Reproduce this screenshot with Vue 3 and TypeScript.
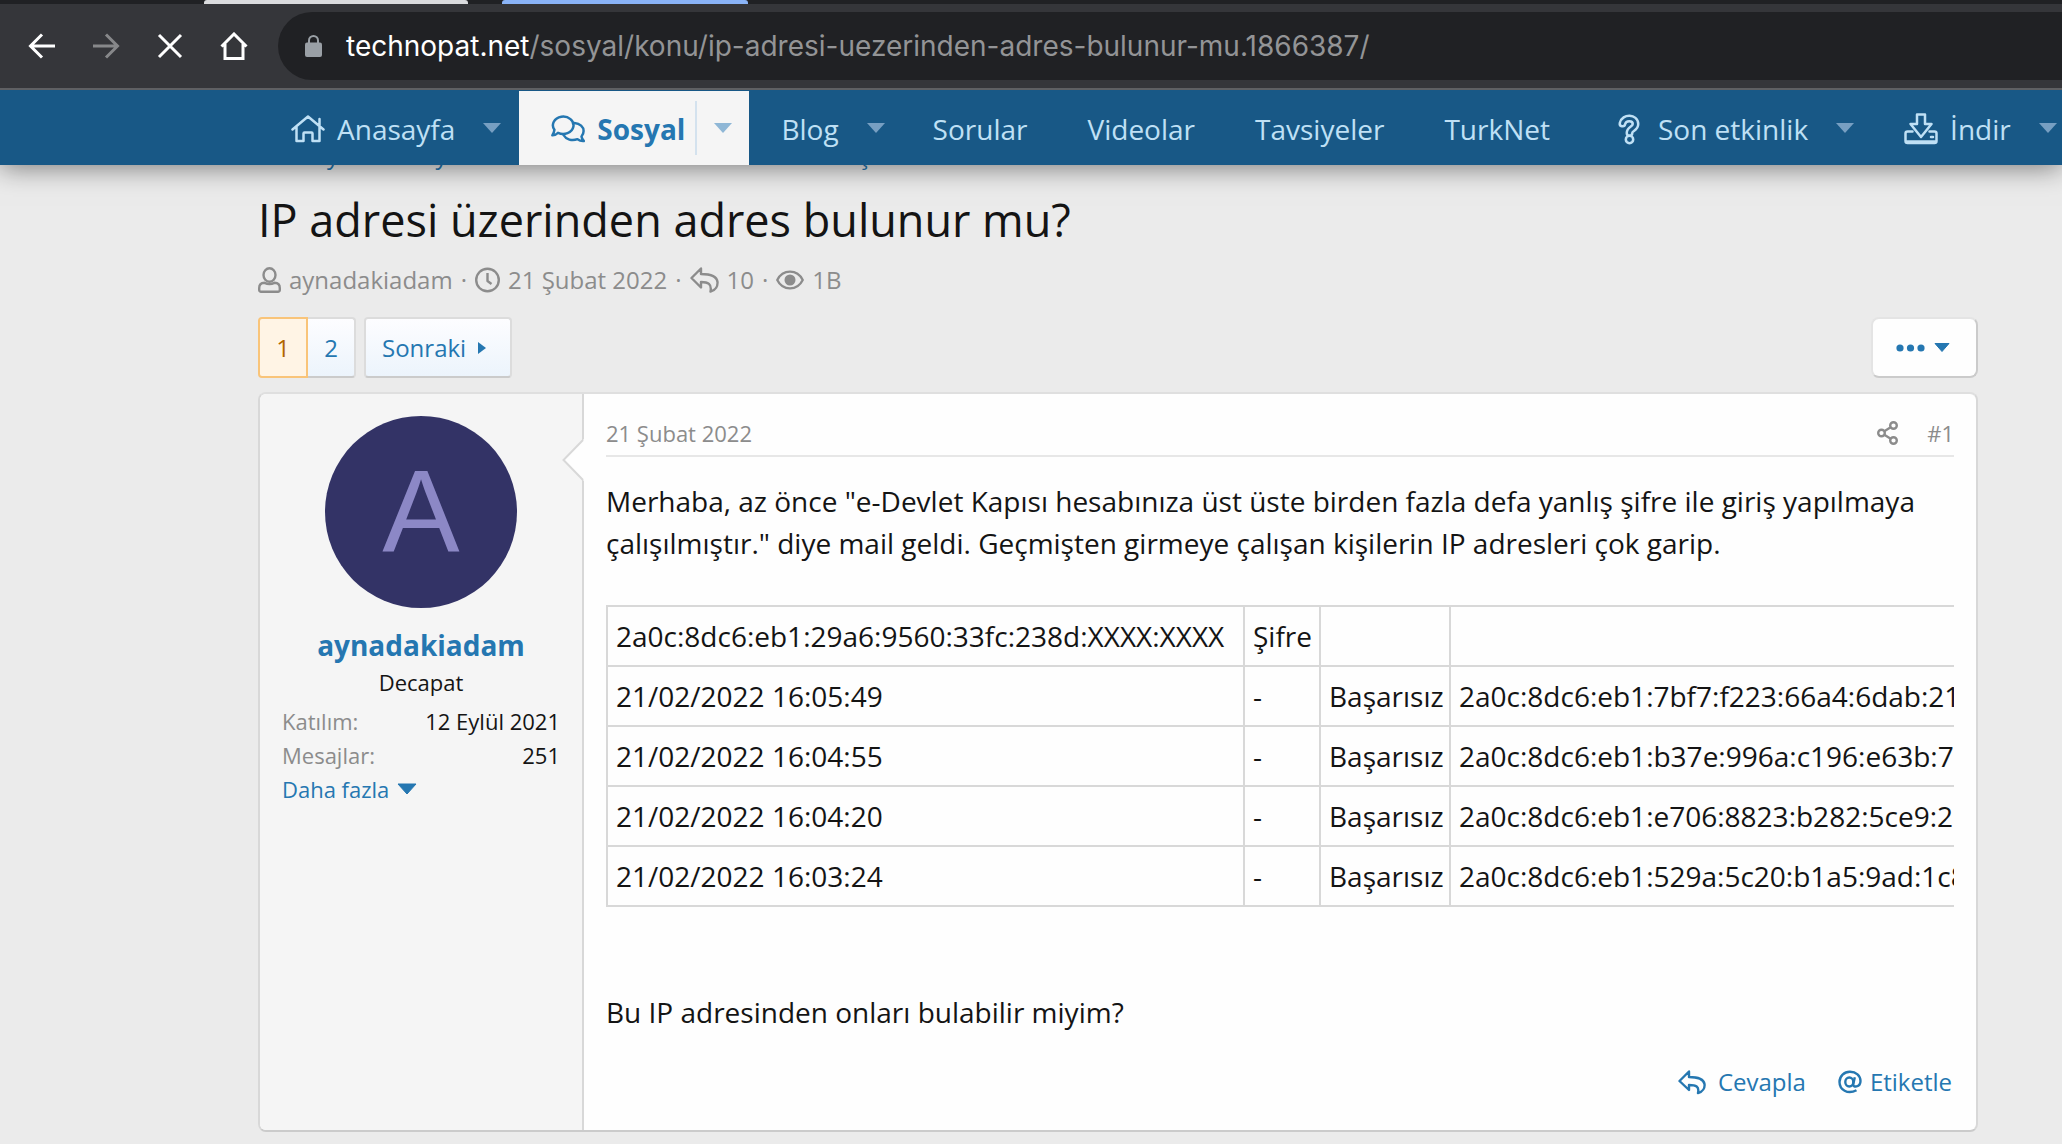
<script setup lang="ts">
interface NavItem {
  label: string
  icon?: 'home' | 'comments' | 'question' | 'download'
  menu?: boolean
  active?: boolean
}

const navItems: NavItem[] = [
  { label: 'Anasayfa', icon: 'home', menu: true },
  { label: 'Sosyal', icon: 'comments', menu: true, active: true },
  { label: 'Blog', menu: true },
  { label: 'Sorular' },
  { label: 'Videolar' },
  { label: 'Tavsiyeler' },
  { label: 'TurkNet' },
  { label: 'Son etkinlik', icon: 'question', menu: true },
  { label: 'İndir', icon: 'download', menu: true },
]

const crumbs = ['Sosyal', 'Sosyal', 'Modem ve kablosuz internet erişimi']

const logRows: string[][] = [
  ['2a0c:8dc6:eb1:29a6:9560:33fc:238d:XXXX:XXXX', 'Şifre', '', ''],
  ['21/02/2022 16:05:49', '-', 'Başarısız', '2a0c:8dc6:eb1:7bf7:f223:66a4:6dab:21'],
  ['21/02/2022 16:04:55', '-', 'Başarısız', '2a0c:8dc6:eb1:b37e:996a:c196:e63b:7'],
  ['21/02/2022 16:04:20', '-', 'Başarısız', '2a0c:8dc6:eb1:e706:8823:b282:5ce9:2'],
  ['21/02/2022 16:03:24', '-', 'Başarısız', '2a0c:8dc6:eb1:529a:5c20:b1a5:9ad:1c8'],
]
</script>

<template>
  <div class="page">
    <header class="top">
      <div class="tabs" aria-hidden="true">
        <span class="tab tab-light"></span>
        <span class="tab tab-blue"></span>
      </div>
      <div class="toolbar">
        <button class="tool" type="button" aria-label="Geri">
          <svg width="28" height="28" viewBox="0 0 28 28"><path d="M27 14H3M14 2.5 2.5 14 14 25.5" /></svg>
        </button>
        <button class="tool dim" type="button" aria-label="İleri">
          <svg width="28" height="28" viewBox="0 0 28 28"><path d="M1 14H25M14 2.5 25.5 14 14 25.5" /></svg>
        </button>
        <button class="tool" type="button" aria-label="Durdur">
          <svg width="28" height="28" viewBox="0 0 28 28"><path d="M3 3 25 25M25 3 3 25" /></svg>
        </button>
        <button class="tool" type="button" aria-label="Ana sayfa">
          <svg width="28" height="28" viewBox="0 0 28 28"><path d="M1.5 14.5 14 2 26.5 14.5M5 12V26.5H23V12" /></svg>
        </button>
        <div class="omnibox">
          <svg class="lock" width="17" height="22" viewBox="0 0 17 22">
            <rect x="0" y="7.5" width="17" height="14.5" rx="2" fill="#9aa0a6" />
            <path d="M4 8.5V5.5a4.5 4.5 0 0 1 9 0V8.5" fill="none" stroke="#9aa0a6" stroke-width="2" />
          </svg>
          <span class="url"><b>technopat.net</b>/sosyal/konu/ip-adresi-uezerinden-adres-bulunur-mu.1866387/</span>
        </div>
      </div>

      <nav class="nav">
        <div v-for="item in navItems" :key="item.label" class="nav-item" :class="{ active: item.active }">
          <a class="nav-link" :class="{ plain: !item.menu }" href="#">
            <svg v-if="item.icon === 'home'" class="ico" width="34" height="28" viewBox="0 0 34 28">
              <path d="M1.5 14.5 17 1.5 32.5 14.5M28.5 11V4M5.5 11.5V26H12.5V18.5a1 1 0 0 1 1-1H20.5a1 1 0 0 1 1 1V26H28.5V11.5" />
            </svg>
            <svg v-else-if="item.icon === 'comments'" class="ico" width="34" height="28" viewBox="0 0 34 28">
              <path d="M7 17.8A10.3 8.7 0 1 0 3.4 14.8C3.2 17 2.2 18.8 1.4 20.3C3.8 20.4 5.6 19.1 7 17.8Z" />
              <path d="M23.5 8C29 8.5 32.6 12 32.6 16C32.6 18.5 31.8 20 30.5 21.5C30.8 23.5 31.8 25 32.8 26C30 26.3 28 25.3 26.5 24.2C21 26.3 15 24.5 12.5 20" />
            </svg>
            <svg v-else-if="item.icon === 'question'" class="ico" width="34" height="32" viewBox="0 0 34 32">
              <path class="outer" d="M10.5 10.5C12 3.5 23.5 4 23.5 11C23.5 16 17.5 15.5 17.5 20" />
              <path class="inner" d="M10.5 10.5C12 3.5 23.5 4 23.5 11C23.5 16 17.5 15.5 17.5 20" />
              <circle cx="17.5" cy="26.5" r="3.7" fill="#185886" />
            </svg>
            <svg v-else-if="item.icon === 'download'" class="ico" width="34" height="32" viewBox="0 0 34 32">
              <path d="M13 1.5H21V11H27.5L17 24 6.5 11H13ZM8.5 18.5H3.5a2 2 0 0 0-2 2V28a2 2 0 0 0 2 2H30.5a2 2 0 0 0 2-2V20.5a2 2 0 0 0-2-2H25.5M2 28.5H32M27 24h2" />
            </svg>
            <span>{{ item.label }}</span>
          </a>
          <button v-if="item.menu" class="nav-menu" type="button" :aria-label="item.label + ' menüsü'">
            <svg width="18" height="10" viewBox="0 0 18 10"><path d="M0 0H18L9 10Z" fill="currentColor" /></svg>
          </button>
        </div>
      </nav>
    </header>

    <main class="main">
      <div class="crumbs">
        <a v-for="(crumb, i) in crumbs" :key="i" href="#">{{ crumb }}</a>
      </div>

      <h1>IP adresi üzerinden adres bulunur mu?</h1>

      <div class="meta">
        <svg width="23" height="26" viewBox="0 0 23 26">
          <ellipse cx="11.5" cy="8" rx="6" ry="6.7" />
          <path d="M6.5 15.8C3 16 1.2 18 1.2 21V23a1.8 1.8 0 0 0 1.8 1.8H20a1.8 1.8 0 0 0 1.8-1.8V21C21.8 18 20 16 16.5 15.8C13 17.5 10 17.5 6.5 15.8Z" />
        </svg>
        <a href="#">aynadakiadam</a>
        <i>·</i>
        <svg width="25" height="26" viewBox="0 0 25 26"><circle cx="12.5" cy="13" r="11.3" /><path d="M12.5 6V14L16.5 17" /></svg>
        <time>21 Şubat 2022</time>
        <i>·</i>
        <svg width="29" height="26" viewBox="0 0 29 26">
          <path d="M11 1.5 1.5 11 11 20.5V15C18 15 22 17 20.5 24.5C26 23 27.8 18.5 27.5 15C26.8 9 20 7 11 7Z" />
        </svg>
        <span>10</span>
        <i>·</i>
        <svg width="28" height="26" viewBox="0 0 29 26">
          <path d="M1.3 13C7 1.5 22 1.5 27.7 13C22 24.5 7 24.5 1.3 13Z" />
          <circle cx="14.5" cy="13" r="4.5" fill="currentColor" />
        </svg>
        <span>1B</span>
      </div>

      <div class="bar">
        <div class="pager">
          <a class="pg current" href="#">1</a>
          <a class="pg last" href="#">2</a>
        </div>
        <a class="next" href="#">Sonraki
          <svg width="8" height="12" viewBox="0 0 8 12"><path d="M0 0 8 6 0 12Z" fill="currentColor" /></svg>
        </a>
        <button class="more" type="button" aria-label="Diğer seçenekler">
          <svg width="58" height="10" viewBox="0 0 58 10">
            <g fill="currentColor">
              <circle cx="4" cy="5" r="3.6" /><circle cx="14.5" cy="5" r="3.6" /><circle cx="25" cy="5" r="3.6" />
              <path d="M39 0.5H53L46 8.5Z" stroke="currentColor" stroke-linejoin="round" />
            </g>
          </svg>
        </button>
      </div>

      <article class="post">
        <aside class="user">
          <svg class="notch" width="22" height="42" viewBox="0 0 22 42">
            <path d="M22 0V42L1.5 21Z" fill="#fefefe" />
            <path d="M21 1 1.5 21 21 41" fill="none" stroke="#d8d8d8" stroke-width="2" />
          </svg>
          <a class="avatar" href="#">A</a>
          <a class="name" href="#">aynadakiadam</a>
          <div class="rank">Decapat</div>
          <dl class="stats">
            <div><dt>Katılım:</dt><dd>12 Eylül 2021</dd></div>
            <div><dt>Mesajlar:</dt><dd>251</dd></div>
          </dl>
          <button class="expand" type="button">Daha fazla
            <svg width="20" height="12" viewBox="0 0 20 12"><path d="M1 1H19L10 11Z" fill="currentColor" stroke="currentColor" stroke-linejoin="round" /></svg>
          </button>
        </aside>

        <section class="body">
          <div class="post-head">
            <time>21 Şubat 2022</time>
            <a class="share" href="#" aria-label="Paylaş">
              <svg width="22" height="24" viewBox="0 0 22 24">
                <circle cx="4.5" cy="12" r="3.3" /><circle cx="16.5" cy="4.5" r="3.3" /><circle cx="16.5" cy="19.5" r="3.3" />
                <path d="M7.3 10.2 13.7 6.3M7.3 13.8 13.7 17.7" />
              </svg>
            </a>
            <a href="#">#1</a>
          </div>
          <p class="text">
            Merhaba, az önce "e-Devlet Kapısı hesabınıza üst üste birden fazla defa yanlış şifre ile giriş yapılmaya
            çalışılmıştır." diye mail geldi. Geçmişten girmeye çalışan kişilerin IP adresleri çok garip.
          </p>
          <div class="table-wrap">
            <table>
              <colgroup><col class="c1" /><col class="c2" /><col class="c3" /><col /></colgroup>
              <tbody>
                <tr v-for="row in logRows" :key="row[0]">
                  <td v-for="(cell, i) in row" :key="i">{{ cell }}</td>
                </tr>
              </tbody>
            </table>
          </div>
          <p class="text question">Bu IP adresinden onları bulabilir miyim?</p>
          <div class="actions">
            <a class="reply" href="#">
              <svg width="28" height="26" viewBox="0 0 28 26">
                <path d="M11 2.5 1.5 12 11 21V16C18 16 21.5 17.5 20 24C25 22.5 27 18.5 26.5 15C25.5 9.5 19 8 11 8Z" />
              </svg>
              <span>Cevapla</span>
            </a>
            <a class="mention" href="#">
              <svg width="24" height="24" viewBox="0 0 24 24">
                <path d="M18.5 20.2C9.5 25 1.5 19.5 1.5 12A10.3 10.3 0 0 1 12 1.7C18 1.7 22.5 5.5 22.5 11C22.5 17.5 14.5 18 15.3 14L16.8 7.2" />
                <ellipse cx="11.3" cy="12" rx="4" ry="4.5" />
              </svg>
              <span>Etiketle</span>
            </a>
          </div>
        </section>
      </article>
    </main>
  </div>
</template>

<style>
body {
  margin: 0;
  background: #ebebeb;
}
</style>

<style scoped>
.page {
  overflow: hidden;
  min-height: 100vh;
  background: #ebebeb;
  color: #141414;
  font-family: "Open Sans", "Noto Sans", sans-serif;
}
a {
  color: #2577b1;
  text-decoration: none;
}
button {
  margin: 0;
  padding: 0;
  border: 0;
  background: none;
  font: inherit;
  color: inherit;
}
svg {
  flex: none;
  display: block;
}

/* browser chrome */
.top {
  position: relative;
  z-index: 2;
  box-shadow: 0 2px 26px rgba(0, 0, 0, 0.5);
}
.tabs {
  display: flex;
  gap: 34px;
  height: 4px;
  padding-left: 204px;
  background: #202124;
}
.tab {
  border-radius: 3px 3px 0 0;
}
.tab-light {
  width: 264px;
  background: #dadbde;
}
.tab-blue {
  width: 246px;
  background: #8ab4f8;
}
.toolbar {
  display: flex;
  align-items: center;
  height: 84px;
  padding-left: 28px;
  border-bottom: 2px solid #5f6063;
  background: #35363a;
}
.tool {
  margin-right: 36px;
}
.tool svg {
  fill: none;
  stroke: #fff;
  stroke-width: 3;
}
.tool.dim svg {
  stroke: #87888a;
}
.omnibox {
  flex: 1;
  display: flex;
  align-items: center;
  height: 68px;
  margin-left: -6px;
  padding-left: 27px;
  border-radius: 34px 0 0 34px;
  background: #202124;
}
.lock {
  margin-right: 24px;
}
.url {
  font: 28px "Inter", sans-serif;
  color: #939496;
  white-space: nowrap;
}
.url b {
  font-weight: 400;
  color: #fff;
}

/* site navigation */
.nav {
  display: flex;
  height: 74px;
  padding-left: 259px;
  border-top: 1px solid #185886;
  background: #185886;
  overflow: hidden;
}
.nav-item {
  flex: none;
  display: flex;
  color: #bfe0f5;
}
.nav-link {
  display: flex;
  align-items: center;
  padding: 2px 10px 0 32px;
  color: inherit;
  font-size: 28px;
  white-space: nowrap;
}
.nav-link.plain {
  padding: 2px 30px 0 30px;
}
.ico {
  margin-right: 12px;
  fill: none;
  stroke: currentColor;
  stroke-width: 2.5;
  stroke-linejoin: round;
  stroke-linecap: round;
}
.ico .outer {
  stroke-width: 8;
}
.ico .inner {
  stroke: #185886;
  stroke-width: 3;
}
.nav-menu {
  display: flex;
  align-items: center;
  justify-content: center;
  width: 54px;
  color: #779fc2;
}
.nav-item.active {
  background: #f5f5f5;
  color: #2577b1;
}
.active .nav-link {
  font-weight: 700;
}
.active .nav-menu {
  height: 54px;
  margin-top: 10px;
  border-left: 2px solid #d4e2ee;
  color: #8fb7d6;
}

/* thread header */
.main {
  margin-top: -27px;
  padding: 0 84px 12px 258px;
}
.crumbs {
  display: flex;
  gap: 38px;
  height: 34px;
  padding-left: 30px;
  font-size: 24px;
  line-height: 34px;
}
h1 {
  margin: 20px 0 15px;
  font-size: 45px;
  font-weight: 400;
  line-height: 56px;
}
.meta {
  display: flex;
  align-items: center;
  gap: 8px;
  height: 34px;
  font-size: 24px;
  line-height: 34px;
  color: #8c8c8c;
}
.meta a {
  color: inherit;
}
.meta i {
  font-style: normal;
}
.meta svg,
.share svg,
.actions svg {
  fill: none;
  stroke: currentColor;
  stroke-width: 2.4;
  stroke-linejoin: round;
}
.bar {
  display: flex;
  height: 61px;
  margin: 20px 0 14px;
  font-size: 24px;
}
.pager {
  display: flex;
  margin-right: 8px;
}
.pg,
.next,
.more {
  box-sizing: border-box;
  display: flex;
  align-items: center;
  justify-content: center;
  border: 2px solid #dcdcdc;
  border-bottom-color: #cbcbcb;
  border-radius: 4px;
  background: linear-gradient(#fdfdff, #ecf4fc);
}
.pg {
  width: 50px;
}
.pg.current {
  border-color: #f9c479;
  border-radius: 4px 0 0 4px;
  background: #fff4e5;
  color: #b06500;
}
.pg.last {
  width: 48px;
  border-left: 0;
  border-radius: 0 4px 4px 0;
}
.next {
  justify-content: flex-start;
  gap: 12px;
  width: 148px;
  padding-left: 16px;
}
.more {
  width: 107px;
  margin-left: auto;
  border-radius: 8px;
  border-color: #e4e4e4 #cbcbcb #cbcbcb #e4e4e4;
  background: #fefefe;
  color: #2577b1;
}

/* post */
.post {
  display: flex;
  border: 2px solid #d8d8d8;
  border-top-color: #dfdfdf;
  border-bottom-color: #cbcbcb;
  border-radius: 8px;
  background: #fefefe;
}
.user {
  position: relative;
  box-sizing: border-box;
  flex: none;
  display: flex;
  flex-direction: column;
  width: 324px;
  padding: 22px 22px 0;
  border-right: 2px solid #d8d8d8;
  border-radius: 6px 0 0 6px;
  background: #f5f5f5;
  font-size: 22px;
  line-height: 34px;
}
.notch {
  position: absolute;
  top: 45px;
  right: -2px;
}
.avatar {
  align-self: center;
  width: 192px;
  height: 192px;
  border-radius: 50%;
  background: #333366;
  color: #8c88c6;
  font: 116px/192px "Liberation Sans", Arial, sans-serif;
  text-align: center;
}
.name {
  margin-top: 17px;
  font-size: 28px;
  font-weight: 700;
  line-height: 40px;
  text-align: center;
}
.rank {
  text-align: center;
}
.stats {
  margin: 5px 0 0;
}
.stats div {
  display: flex;
  justify-content: space-between;
}
.stats dt {
  color: #8c8c8c;
}
.stats dd {
  margin: 0;
}
.expand {
  display: flex;
  align-items: center;
  gap: 8px;
  color: #2577b1;
  line-height: 34px;
}
.body {
  flex: 1;
  min-width: 0;
  padding: 22px 22px 31px;
}
.post-head {
  display: flex;
  align-items: center;
  padding-bottom: 5px;
  border-bottom: 2px solid #e7e7e7;
  color: #8c8c8c;
  font-size: 22px;
  line-height: 34px;
}
.post-head a {
  color: inherit;
}
.share {
  margin: 0 28px 0 auto;
}
.text {
  margin: 23px 0 41px;
  font-size: 28px;
  line-height: 42px;
}
.table-wrap {
  overflow: hidden;
}
table {
  width: 1600px;
  border-collapse: collapse;
  table-layout: fixed;
  font-size: 28px;
}
.c1 {
  width: 637px;
}
.c2 {
  width: 76px;
}
.c3 {
  width: 130px;
}
td {
  box-sizing: border-box;
  height: 60px;
  padding: 0 8px;
  border: 2px solid #d8d8d8;
  white-space: nowrap;
}
.question {
  margin: 84px 0 32px;
}
.actions {
  display: flex;
  justify-content: flex-end;
  gap: 32px;
  padding-right: 2px;
  font-size: 24px;
  line-height: 34px;
}
.actions a {
  display: flex;
  align-items: center;
}
.reply {
  gap: 12px;
}
.mention {
  gap: 8px;
}
</style>
